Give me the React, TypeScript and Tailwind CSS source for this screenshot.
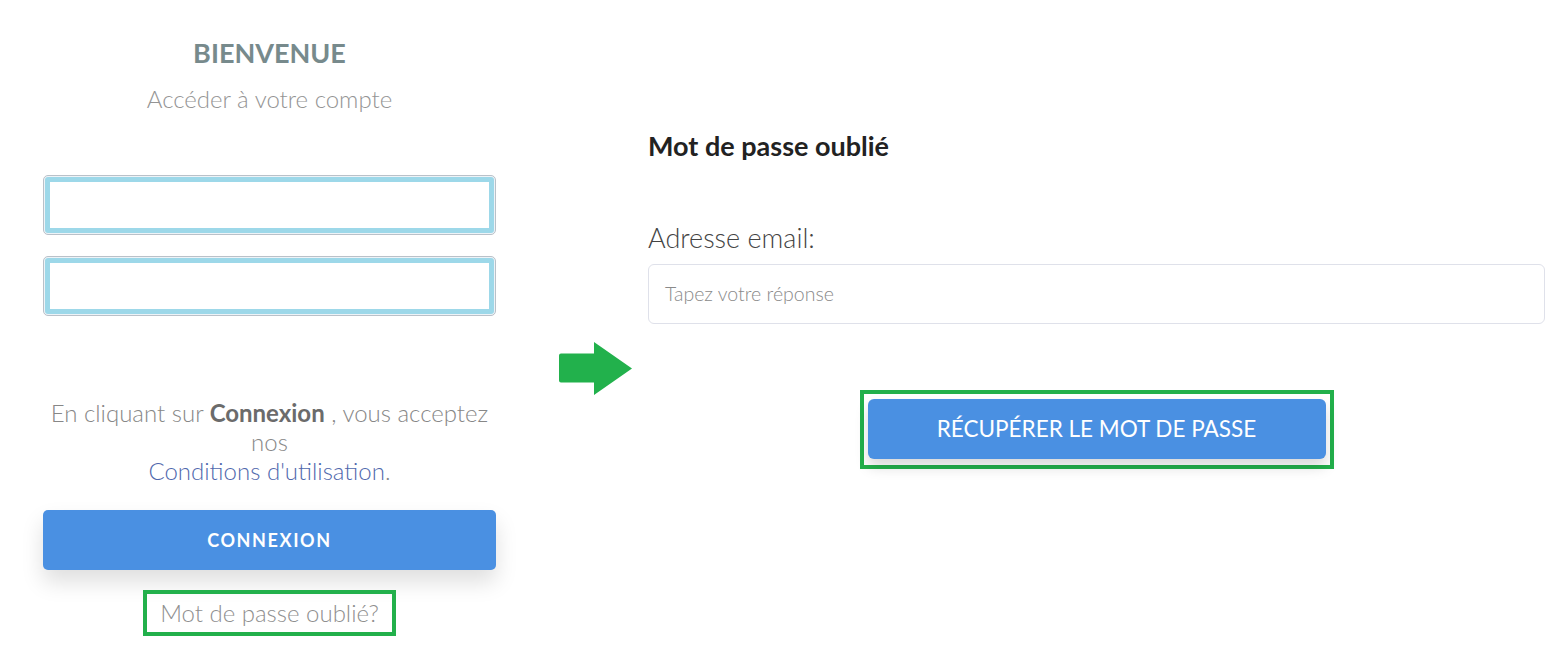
import React from 'react';

const FieldBox = () => (
  <div className="h-[60px] w-full rounded-[5px] border border-[#b9c1c9] bg-[#eef3f7] p-px">
    <div className="h-full w-full rounded-[3px] border-[5px] border-[#9dd8e9] bg-white" />
  </div>
);

const GreenArrow = () => (
  <svg width="74" height="55" viewBox="0 0 74 55" className="block">
    <path
      d="M2 12.5 H35 V1 L73 27.5 L35 54 V41.5 H2 Q0 41.5 0 39.5 V14.5 Q0 12.5 2 12.5 Z"
      fill="#22b14c"
    />
  </svg>
);

const App = () => {
  return (
    <div className="min-h-[655px] w-[1554px] bg-white font-['Lato','Open_Sans',sans-serif]">
      <div className="flex items-start pl-[43px]">
        {/* Login column */}
        <div className="flex w-[453px] flex-col items-center pt-[37px]">
          <h1 className="text-[27px] font-bold leading-[32px] text-[#778a8c]">BIENVENUE</h1>
          <p className="mt-[16px] text-[24px] font-light leading-[28px] text-[#949494]">
            Accéder à votre compte
          </p>

          <div className="mt-[62px] flex w-full flex-col gap-[21px]">
            <FieldBox />
            <FieldBox />
          </div>

          <p className="mt-[82px] whitespace-nowrap text-center text-[24px] font-light leading-[29px] text-[#878787]">
            En cliquant sur <span className="font-bold text-[#6b6b6b]">Connexion</span> , vous acceptez
            <br />
            nos
            <br />
            <span className="text-[#5068ad]">Conditions d'utilisation</span>.
          </p>

          <button className="mt-[25px] h-[60px] w-full rounded-[5px] bg-[#4a90e2] text-[18px] font-bold tracking-[1.6px] text-white shadow-[0_12px_22px_rgba(0,0,0,0.13)]">
            CONNEXION
          </button>

          <div className="mt-[20px] flex h-[46px] w-[253px] items-center justify-center border-4 border-[#22b04b] text-[24px] font-light text-[#8f8f8f]">
            Mot de passe oublié?
          </div>
        </div>

        {/* Arrow */}
        <div className="ml-[63px] mt-[341px] w-[89px]">
          <GreenArrow />
        </div>

        {/* Recovery column */}
        <div className="flex w-[897px] flex-col pt-[130px]">
          <h2 className="text-[27px] font-bold leading-[32px] text-[#222222]">Mot de passe oublié</h2>
          <label className="mt-[60px] text-[27px] font-light leading-[32px] text-[#444444]">Adresse email:</label>
          <div className="mt-[10px] flex h-[60px] items-center rounded-[6px] border border-[#dfe1ea] pl-[16px]">
            <span className="text-[19.5px] font-light text-[#8a8a8a]">Tapez votre réponse</span>
          </div>

          <div className="mt-[66px] flex justify-center">
            <div className="border-4 border-[#22b04b] px-1 pt-[5px] pb-[6px]">
              <button className="h-[60px] w-[458px] rounded-[6px] bg-[#4a90e2] text-[22.5px] font-normal text-white shadow-[0_8px_14px_rgba(0,0,0,0.15)]">
                RÉCUPÉRER LE MOT DE PASSE
              </button>
            </div>
          </div>
        </div>
      </div>
    </div>
  );
};

export default App;
